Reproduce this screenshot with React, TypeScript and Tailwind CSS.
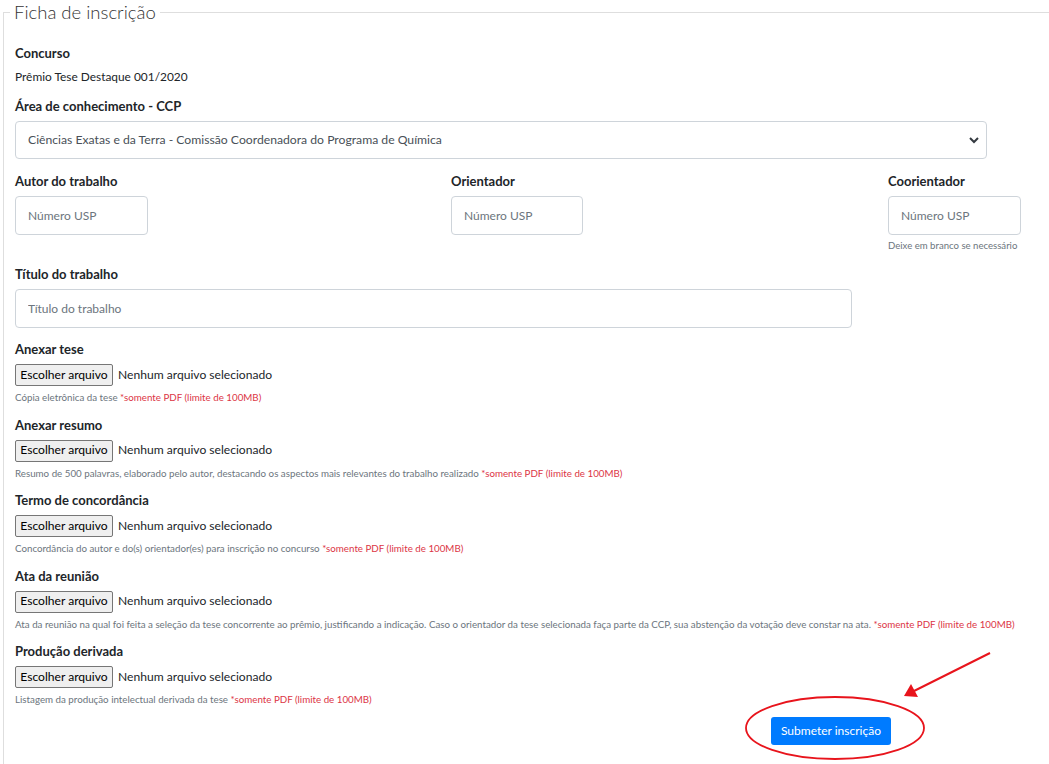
import React from 'react';

const font = { fontFamily: 'Lato, "Open Sans", sans-serif' };

const uploads = [
  { label: 'Anexar tese', help: 'Cópia eletrônica da tese' },
  {
    label: 'Anexar resumo',
    help: 'Resumo de 500 palavras, elaborado pelo autor, destacando os aspectos mais relevantes do trabalho realizado',
  },
  {
    label: 'Termo de concordância',
    help: 'Concordância do autor e do(s) orientador(es) para inscrição no concurso',
  },
  {
    label: 'Ata da reunião',
    help: 'Ata da reunião na qual foi feita a seleção da tese concorrente ao prêmio, justificando a indicação. Caso o orientador da tese selecionada faça parte da CCP, sua abstenção da votação deve constar na ata.',
  },
  { label: 'Produção derivada', help: 'Listagem da produção intelectual derivada da tese' },
];

function Label({ children }: { children: React.ReactNode }) {
  return <label className="block text-[13px] leading-[20px] font-bold text-[#212529]">{children}</label>;
}

function TextInput({ placeholder, className }: { placeholder: string; className: string }) {
  return (
    <input
      type="text"
      placeholder={placeholder}
      className={`h-[39px] px-3 text-[12px] bg-white border border-[#ced4da] rounded-[4px] text-[#495057] placeholder:text-[#6c757d] outline-none ${className}`}
    />
  );
}

function FileField({ label, help }: { label: string; help: string }) {
  return (
    <div className="mt-[11.5px] first-of-type:mt-[11px]">
      <Label>{label}</Label>
      <div className="mt-[5px] flex items-center h-[22px]">
        <button className="h-[22px] w-[98px] text-[12.1px] text-black bg-[#efefef] border border-[#767676] rounded-[2px]">
          Escolher arquivo
        </button>
        <span className="ml-[5px] text-[12.1px] text-[#212529]">Nenhum arquivo selecionado</span>
      </div>
      <p className="mt-[5px] text-[9.75px] leading-[12px] text-[#6c757d]">
        {help} <span className="text-[#dc3545]">*somente PDF (limite de 100MB)</span>
      </p>
    </div>
  );
}

export default function App() {
  return (
    <div className="relative w-full h-[764px] overflow-hidden bg-white" style={font}>
      <fieldset className="ml-[3px] w-[1100px] border border-[#dedede] pl-[11px] pb-10">
        <legend className="-ml-[5px] px-[4px] text-[18.5px] leading-[24px] font-light text-[#333]">
          Ficha de inscrição
        </legend>

        <div className="mt-[19px]">
          <Label>Concurso</Label>
          <p className="mt-[4px] text-[11.9px] leading-[20px] text-[#212529]">Prêmio Tese Destaque 001/2020</p>
        </div>

        <div className="mt-[9px]">
          <Label>Área de conhecimento - CCP</Label>
          <div className="relative mt-[5px] w-[972px]">
            <select className="w-full h-[38px] pl-3 pr-8 text-[12.2px] text-[#495057] bg-white border border-[#ced4da] rounded-[4px] appearance-none outline-none">
              <option>Ciências Exatas e da Terra - Comissão Coordenadora do Programa de Química</option>
            </select>
            <svg
              className="absolute right-[8px] top-[15px] w-[10px] h-[8px] pointer-events-none"
              viewBox="0 0 10 8"
              fill="none"
              stroke="#343a40"
              strokeWidth="2"
            >
              <path d="M1 2l4 4 4-4" />
            </svg>
          </div>
        </div>

        <div className="mt-3 flex">
          <div className="w-[436px]">
            <Label>Autor do trabalho</Label>
            <TextInput placeholder="Número USP" className="mt-[5px] w-[133px]" />
          </div>
          <div className="w-[437px]">
            <Label>Orientador</Label>
            <TextInput placeholder="Número USP" className="mt-[5px] w-[132px]" />
          </div>
          <div>
            <Label>Coorientador</Label>
            <TextInput placeholder="Número USP" className="mt-[5px] w-[133px]" />
            <p className="mt-[5px] text-[9.6px] leading-[12px] text-[#6c757d]">Deixe em branco se necessário</p>
          </div>
        </div>

        <div className="mt-3">
          <Label>Título do trabalho</Label>
          <TextInput placeholder="Título do trabalho" className="mt-[5px] block w-[837px] h-[38px]" />
        </div>

        <div>
          {uploads.map((u) => (
            <FileField key={u.label} label={u.label} help={u.help} />
          ))}
        </div>

        <div className="mt-[12px] pl-[756px]">
          <button className="h-[28px] w-[120px] rounded-[3px] bg-[#007bff] text-[12px] text-white">
            Submeter inscrição
          </button>
        </div>
      </fieldset>

      <svg className="absolute left-0 top-0 pointer-events-none" width="1049" height="764">
        <ellipse cx="835" cy="728" rx="89" ry="31" fill="none" stroke="#e8141c" strokeWidth="1.8" />
        <line x1="990" y1="653" x2="914" y2="691" stroke="#e8141c" strokeWidth="2" />
        <polygon points="904,696 911,684 918,697" fill="#e8141c" />
      </svg>
    </div>
  );
}
